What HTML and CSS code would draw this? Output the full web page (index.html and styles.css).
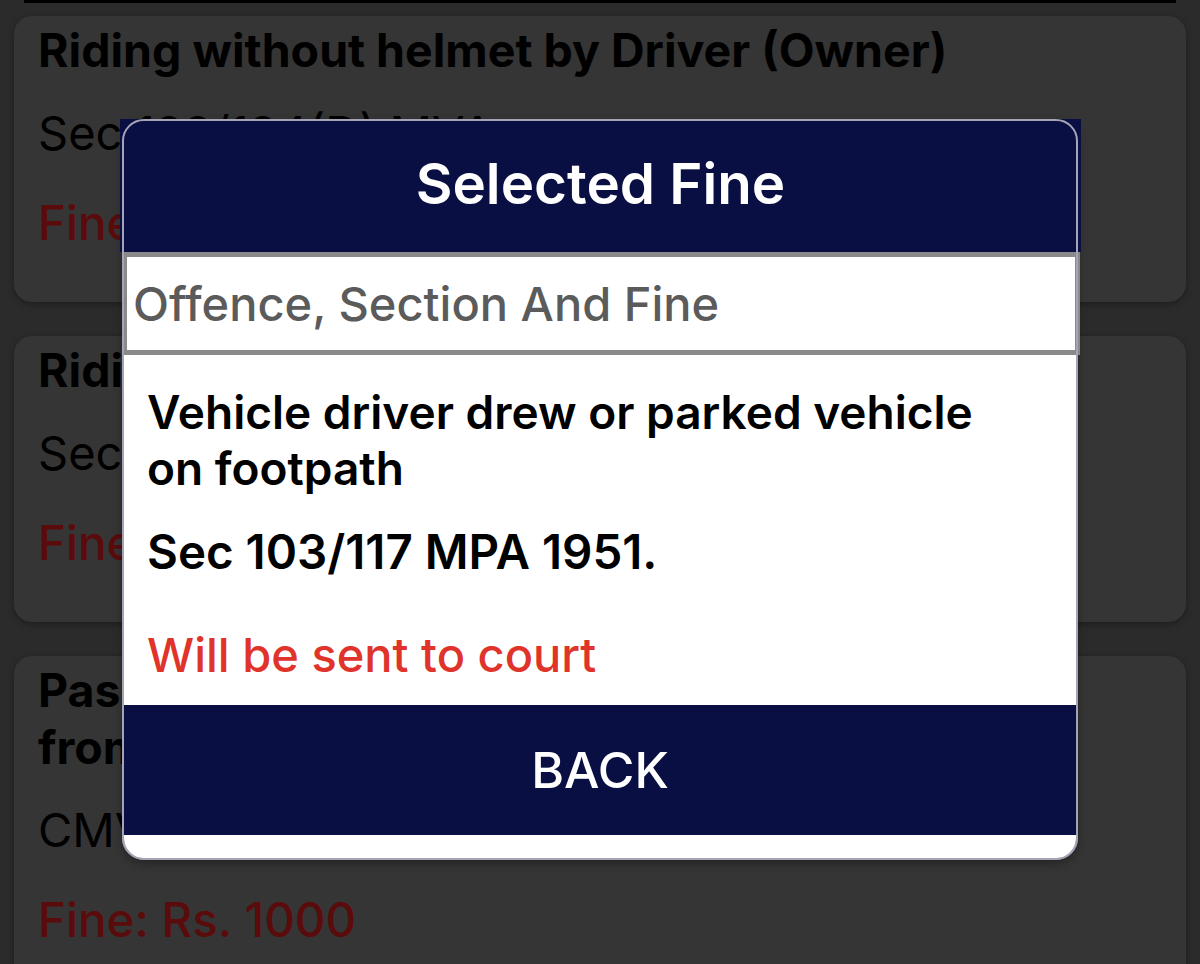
FILE: index.html
```html
<!DOCTYPE html>
<html lang="en">

<head>
    <meta charset="UTF-8">
    <meta name="viewport" content="width=device-width, initial-scale=1.0">
    <title>Selected Fine</title>
    <link rel="stylesheet" href="styles.css">
</head>

<body>

    <div class="list">
        <div class="top-bar"></div>

        <div class="card">
            <div class="card-title">Riding without helmet by Driver (Owner)</div>
            <div class="card-sec">Sec 129/194(D) MVA</div>
            <div class="card-fine">Fine: Rs. 1000</div>
        </div>

        <div class="card">
            <div class="card-title">Riding without helmet by Pillion Rider</div>
            <div class="card-sec">Sec 129/194(D) MVA</div>
            <div class="card-fine">Fine: Rs. 1000</div>
        </div>

        <div class="card">
            <div class="card-title">Passenger vehicle picking up passengers<br>from non-designated place</div>
            <div class="card-sec">CMVR 119/177 MVA</div>
            <div class="card-fine">Fine: Rs. 1000</div>
        </div>
    </div>

    <!-- popup shown over the list -->
    <div class="modal">
        <div class="modal-head">Selected Fine</div>
        <div class="modal-search">Offence, Section And Fine</div>
        <div class="modal-body">
            <p class="offence">Vehicle driver drew or parked vehicle on footpath</p>
            <p class="section">Sec 103/117 MPA 1951.</p>
            <p class="court">Will be sent to court</p>
        </div>
        <button class="back-btn">BACK</button>
    </div>

</body>

</html>
```

FILE: styles.css
```css
body {
    font-family: Inter, "Noto Sans", sans-serif;
    background-color: #2b2b2b;
    margin: 0;
    padding: 0;
    font-size: 47px;
    overflow: hidden;
}

.list {
    padding: 0 14px;
}

.top-bar {
    height: 3px;
    margin: 0 10px;
    background-color: #000;
}

.card {
    background-color: #353535;
    border-radius: 18px;
    margin-top: 13px;
    margin-bottom: 34px;
    padding: 6px 24px 51px;
    box-shadow: 0 2px 6px rgba(0, 0, 0, 0.35);
    color: #000;
}

.card-title {
    font-size: 46.5px;
    font-weight: 700;
    line-height: 57px;
}

.card-sec {
    line-height: 57px;
    margin-top: 25px;
}

.card-fine {
    font-size: 47.5px;
    line-height: 57px;
    margin-top: 33px;
    font-weight: 500;
    color: #5a0b0b;
}

.modal {
    position: absolute;
    left: 122px;
    top: 119px;
    width: 956px;
    box-sizing: border-box;
    background-color: #fff;
    border: 2px solid #8f8f95;
    border-radius: 22px;
    padding-bottom: 23px;
    box-shadow: 0 4px 10px rgba(0, 0, 0, 0.3);
}

.modal::after {
    content: "";
    position: absolute;
    top: -2px;
    left: -2px;
    right: -2px;
    bottom: -2px;
    border: 2px solid #a4a4b6;
    border-radius: 22px;
    pointer-events: none;
}

.modal-head {
    margin: -2px -5px 0 -4px;
    height: 133px;
    padding-bottom: 4px;
    box-sizing: border-box;
    background-color: #090e43;
    color: #fff;
    font-size: 56.5px;
    font-weight: 600;
    display: flex;
    align-items: center;
    justify-content: center;
}

.modal-search {
    height: 103px;
    box-sizing: border-box;
    margin: 0 -4px 0 -2px;
    border: 5px solid #8a8a8a;
    padding-left: 6px;
    display: flex;
    align-items: center;
    color: #5b5b5b;
    font-weight: 500;
}

.modal-body {
    padding: 29px 70px 22px 23px;
}

.modal-body p {
    margin: 0;
    line-height: 56px;
    font-size: 46px;
    font-weight: 600;
    color: #000;
}

.modal-body .section {
    margin-top: 28px;
    font-size: 47.5px;
}

.modal-body .court {
    margin-top: 47px;
    font-size: 47px;
    font-weight: 500;
    color: #e0342b;
}

.back-btn {
    display: block;
    width: 100%;
    height: 130px;
    border: 0;
    padding: 0;
    background-color: #090e43;
    color: #fff;
    font-family: inherit;
    font-size: 50px;
    font-weight: 500;
}
```
